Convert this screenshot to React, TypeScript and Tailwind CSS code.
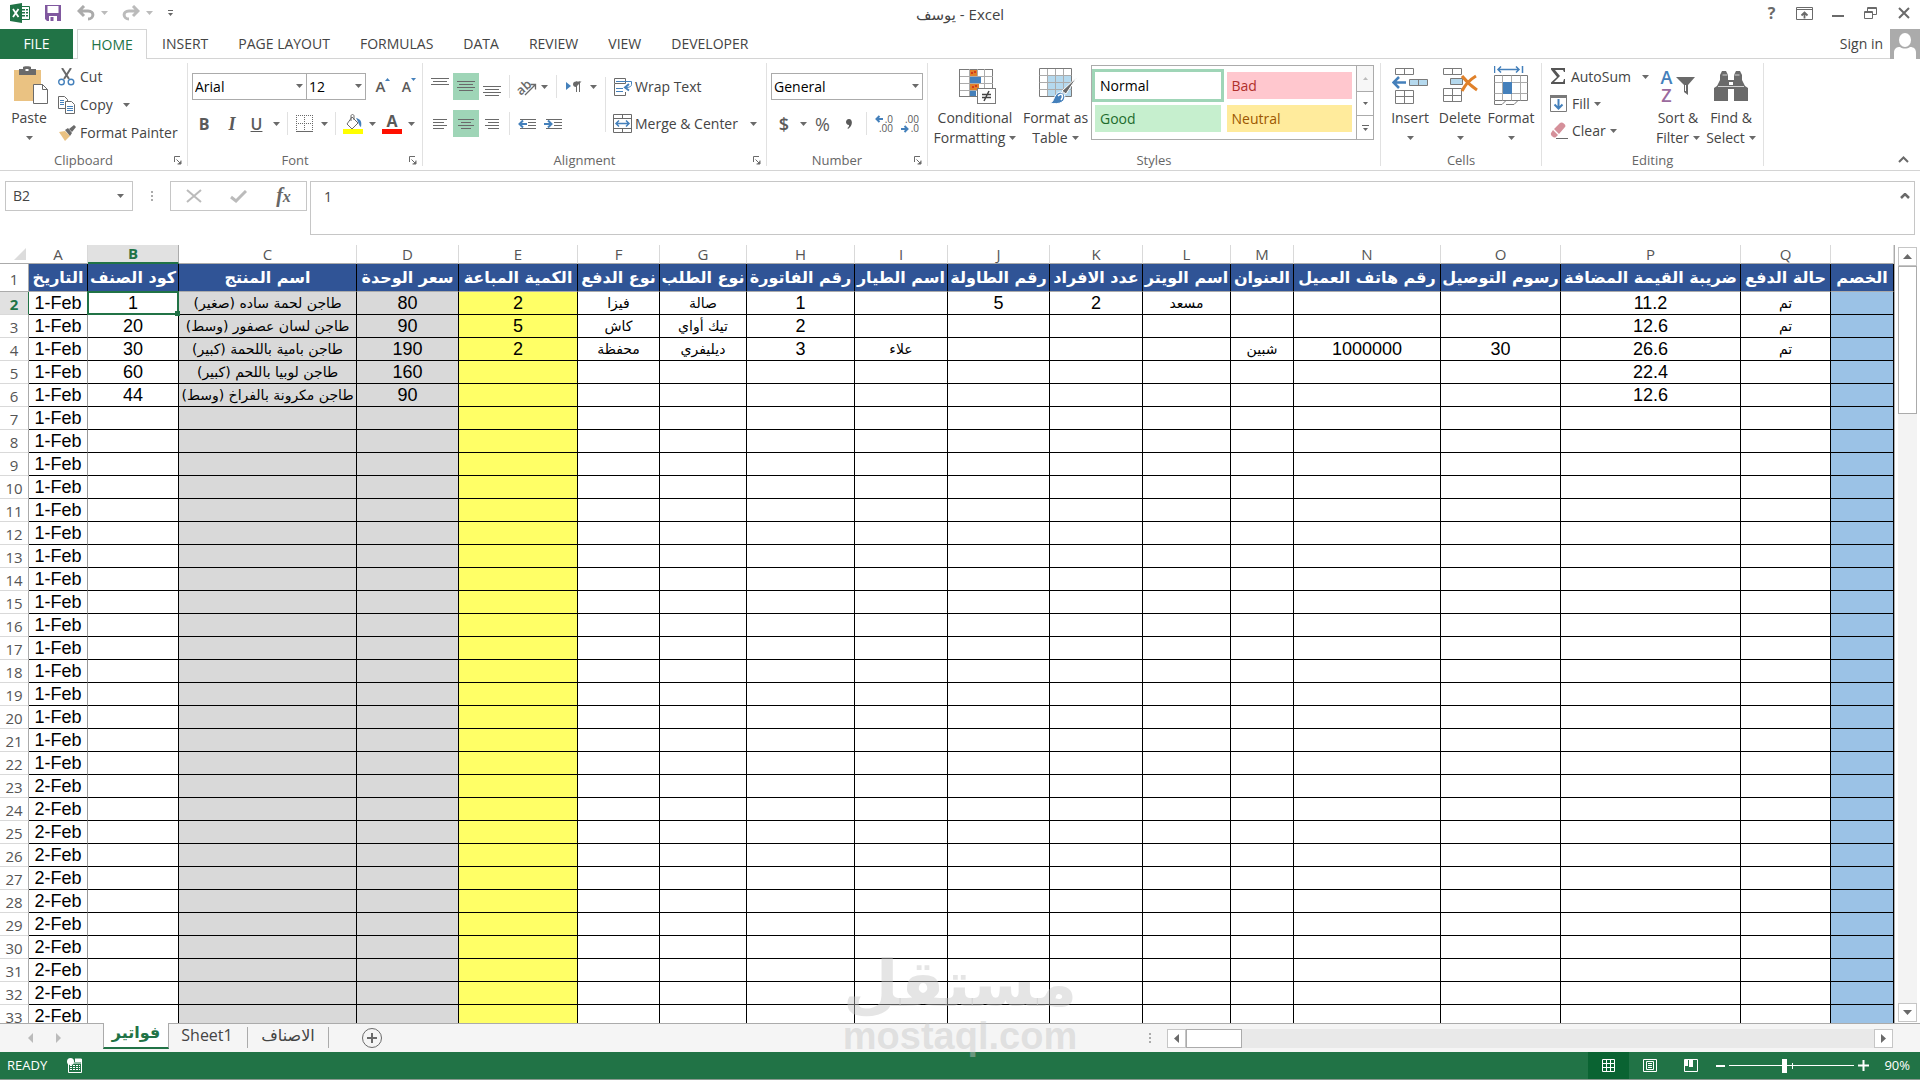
import type { ReactNode } from "react";
import clsx from "clsx";

type Kids = { children?: ReactNode };

const menuTabs = ["INSERT", "PAGE LAYOUT", "FORMULAS", "DATA", "REVIEW", "VIEW", "DEVELOPER"];

const columns = [
  { id: "A", title: "التاريخ", width: "w-[59px]" },
  { id: "B", title: "كود الصنف", width: "w-[91px]" },
  { id: "C", title: "اسم المنتج", width: "w-[178px]" },
  { id: "D", title: "سعر الوحدة", width: "w-[102px]" },
  { id: "E", title: "الكمية المباعة", width: "w-[119px]" },
  { id: "F", title: "نوع الدفع", width: "w-[82px]" },
  { id: "G", title: "نوع الطلب", width: "w-[87px]" },
  { id: "H", title: "رقم الفاتورة", width: "w-[108px]" },
  { id: "I", title: "اسم الطيار", width: "w-[93px]" },
  { id: "J", title: "رقم الطاولة", width: "w-[102px]" },
  { id: "K", title: "عدد الافراد", width: "w-[93px]" },
  { id: "L", title: "اسم الويتر", width: "w-[88px]" },
  { id: "M", title: "العنوان", width: "w-[63px]" },
  { id: "N", title: "رقم هاتف العميل", width: "w-[147px]" },
  { id: "O", title: "رسوم التوصيل", width: "w-[120px]" },
  { id: "P", title: "ضريبة القيمة المضافة", width: "w-[180px]" },
  { id: "Q", title: "حالة الدفع", width: "w-[90px]" },
  { id: "R", title: "الخصم", width: "w-auto" },
];

const data: Record<number, Record<string, string>> = {
  2: { B: "1", C: "طاجن لحمة ساده (صغير)", D: "80", E: "2", F: "فيزا", G: "صالة", H: "1", J: "5", K: "2", L: "مسعد", P: "11.2", Q: "تم" },
  3: { B: "20", C: "طاجن لسان عصفور (وسط)", D: "90", E: "5", F: "كاش", G: "تيك أواي", H: "2", P: "12.6", Q: "تم" },
  4: { B: "30", C: "طاجن بامية باللحمة (كبير)", D: "190", E: "2", F: "محفظة", G: "ديليفري", H: "3", I: "علاء", M: "شبين", N: "1000000", O: "30", P: "26.6", Q: "تم" },
  5: { B: "60", C: "طاجن لوبيا باللحم (كبير)", D: "160", P: "22.4" },
  6: { B: "44", C: "طاجن مكرونة بالفراخ (وسط)", D: "90", P: "12.6" },
};

const rows = Array.from({ length: 32 }, (_, i) => i + 2);

// columns that hold Arabic text use a smaller size than the numeric ones
const textColumns = ["C", "F", "G", "I", "L", "M", "Q"];

function cellFill(id: string) {
  if (id === "C" || id === "D") return "bg-[#d9d9d9]";
  if (id === "E") return "bg-[#ffff66]";
  if (id === "R") return "bg-[#9bc2e6]";
  return "bg-white";
}

function Caret({ className = "text-[#6a6a6a]" }: { className?: string }) {
  return (
    <svg width="7" height="4" viewBox="0 0 7 4" className={clsx("shrink-0", className)}>
      <path d="M0 0h7L3.5 4z" fill="currentColor" />
    </svg>
  );
}

function Lines({ rows: r, w = 18, h = 16 }: { rows: number[][]; w?: number; h?: number }) {
  return (
    <svg width={w} height={h} viewBox={`0 0 ${w} ${h}`} shapeRendering="crispEdges" fill="#6a6a6a">
      {r.map(([x, y, len]) => (
        <rect key={y} x={x} y={y} width={len} height="1" />
      ))}
    </svg>
  );
}

function Tool({ label, className, children }: Kids & { label: string; className: string }) {
  return (
    <button aria-label={label} className={clsx("flex h-[27px] shrink-0 items-center justify-center", className)}>
      {children}
    </button>
  );
}

function Sep({ className = "mx-1" }: { className?: string }) {
  return <span className={clsx("h-[23px] w-px shrink-0 bg-[#e1e1e1]", className)} />;
}

function Group({ title, launcher, className, children }: Kids & { title: string; launcher?: boolean; className: string }) {
  return (
    <section className={clsx("flex shrink-0 flex-col border-r border-[#e1e1e1]", className)}>
      <div className="flex h-[88px]">{children}</div>
      <div className="flex h-[15px] items-center">
        <h2 className="flex-1 pt-1 text-center text-[13px] leading-[15px] text-[#666]">{title}</h2>
        {launcher && (
          <button aria-label={title + " settings"} className="flex w-5 justify-center pt-1">
            <svg width="9" height="9" viewBox="0 0 9 9" fill="none" stroke="#6a6a6a">
              <path d="M1.500 6V.5H7M3.500 3.500l4 4M8 4.500V8H4.500" />
              <path d="M8 5v3H5z" fill="#6a6a6a" stroke="none" />
            </svg>
          </button>
        )}
      </div>
    </section>
  );
}

function Big({ icon, lines, className, children }: { icon: ReactNode; lines: string; className: string; children?: ReactNode }) {
  return (
    <button className={clsx("flex shrink-0 flex-col items-center whitespace-nowrap text-sm leading-5 text-[#444]", className)}>
      <span className="flex h-[45px] items-center">{icon}</span>
      <span>{lines}</span>
      <span className="flex h-5 items-center gap-1">
        {children}
        <Caret />
      </span>
    </button>
  );
}

function Small({ icon, caret, className, children }: Kids & { icon: ReactNode; caret?: string; className: string }) {
  return (
    <button className={clsx("flex items-center whitespace-nowrap text-sm text-[#444]", className)}>
      <span className="flex w-[22px] justify-start">{icon}</span>
      {children}
      {caret && (
        <span className={caret}>
          <Caret />
        </span>
      )}
    </button>
  );
}

function Combo({ label, value, className }: { label: string; value: string; className: string }) {
  return (
    <div className={clsx("relative h-[27px]", className)}>
      <select aria-label={label} defaultValue={value} className="h-full w-full appearance-none border border-[#ababab] bg-white pl-0.5 text-sm text-black outline-none">
        <option>{value}</option>
      </select>
      <span className="pointer-events-none absolute right-1 top-[11px]">
        <Caret />
      </span>
    </div>
  );
}

function TitleBar() {
  return (
    <header className="flex h-[29px] items-center">
      <div className="flex flex-1 items-center pb-[3px]">
        <svg width="20" height="20" viewBox="0 0 20 20" className="ml-[10px]">
          <path d="M11 3.500h8.500v13H11" fill="#fff" stroke="#217346" />
          <path d="M12 6h3v1.500h-3zM16 6h2v1.500h-2zM12 9h3v1.500h-3zM16 9h2v1.500h-2zM12 12h3v1.500h-3zM16 12h2v1.500h-2z" fill="#217346" />
          <path d="M0 2l12-2v20L0 18z" fill="#217346" />
          <path d="M3 6l5.500 8M8.500 6L3 14" stroke="#fff" strokeWidth="1.800" />
        </svg>
        <button aria-label="Save" className="ml-[15px]">
          <svg width="16" height="16" viewBox="0 0 16 16">
            <path d="M0 0h16v16H2l-2-2z" fill="#80589f" />
            <path d="M2.500 1h11v7h-11zM4 11h8v5H4z" fill="#fff" />
            <path d="M5.500 12h3v4h-3z" fill="#80589f" />
          </svg>
        </button>
        <button aria-label="Undo" className="ml-4 flex items-center gap-[6px]">
          <svg width="18" height="16" viewBox="0 0 18 16" fill="none" stroke="#ababab" strokeWidth="3">
            <path d="M2 6h9c7 0 6 8 0 8M7 1L2 6l5 5" />
          </svg>
          <Caret className="text-[#bbb]" />
        </button>
        <button aria-label="Redo" className="ml-[14px] flex items-center gap-[6px]">
          <svg width="18" height="16" viewBox="0 0 18 16" fill="none" stroke="#bbb" strokeWidth="3">
            <path d="M16 6H7c-7 0-6 8 0 8M11 1l5 5-5 5" />
          </svg>
          <Caret className="text-[#bbb]" />
        </button>
        <button aria-label="Customize toolbar" className="ml-[15px] flex flex-col items-center gap-[2px]">
          <span className="h-px w-[5px] bg-[#666]" />
          <svg width="5" height="3" viewBox="0 0 5 3"><path d="M0 0h5L2.500 3z" fill="#666" /></svg>
        </button>
      </div>
      <h1 className="text-[15px] text-[#444]">يوسف - Excel</h1>
      <div className="flex flex-1 items-center justify-end pb-[3px] text-[#6a6a6a]">
        <button aria-label="Help" className="w-[33px] text-base font-bold leading-5">?</button>
        <button aria-label="Ribbon display options" className="flex w-[33px] justify-center">
          <svg width="17" height="13" viewBox="0 0 17 13" fill="none" stroke="currentColor">
            <path d="M.5.5h16v12H.5zM.5 2.500h16" />
            <path d="M8.500 11.500v-6M5.500 8.500l3-3 3 3" strokeWidth="1.800" />
          </svg>
        </button>
        <button aria-label="Minimize" className="flex w-[33px] justify-center pt-[6px]">
          <span className="h-[2px] w-3 bg-[#6a6a6a]" />
        </button>
        <button aria-label="Restore" className="flex w-[33px] justify-center">
          <svg width="13" height="12" viewBox="0 0 13 12" fill="none" stroke="currentColor">
            <path d="M3.500 4V.5h9v7H9M3.500 1.500h9M.5 4.500h8v7h-8zM.5 5.500h8" />
          </svg>
        </button>
        <button aria-label="Close" className="flex w-[33px] justify-center">
          <svg width="12" height="12" viewBox="0 0 12 12" stroke="currentColor" strokeWidth="2">
            <path d="M1 1l10 10M11 1L1 11" />
          </svg>
        </button>
      </div>
    </header>
  );
}

function MenuTabs() {
  return (
    <nav className="flex h-[30px] text-sm text-[#444]">
      <button className="w-[73px] bg-[#217346] text-white">FILE</button>
      <span className="w-1 border-b border-[#d4d4d4]" />
      <button className="w-[70px] border border-b-0 border-[#d4d4d4] text-[#217346]">HOME</button>
      <div className="flex flex-1 border-b border-[#d4d4d4]">
        {menuTabs.map((tab) => (
          <button key={tab} className="px-[15px]">
            {tab}
          </button>
        ))}
        <a href="#signin" className="ml-auto mr-[7px] flex items-center">
          Sign in
        </a>
      </div>
      <svg width="30" height="30" viewBox="0 0 30 30">
        <path d="M0 0h30v30H0z" fill="#ababab" />
        <ellipse cx="15" cy="11" rx="6" ry="7" fill="#fff" />
        <path d="M4 30v-6c0-5 3-6 6-6 3 2 7 2 10 0 4 0 6 2 6 6v6z" fill="#fff" />
      </svg>
    </nav>
  );
}

function ClipboardGroup() {
  return (
    <Group title="Clipboard" launcher className="w-[188px]">
      <Big
        className="w-[58px]"
        lines="Paste"
        icon={
          <svg width="36" height="39" viewBox="0 0 36 39" className="ml-1">
            <path d="M1 4h27v31H1z" fill="#eac282" />
            <path d="M6 3h4V1c0-1 8-1 8 0v2h5v6H6z" fill="#6a6a6a" />
            <path d="M12.500 3h3v2h-3z" fill="#fff" />
            <path d="M20.500 18.500h9l5 5v14h-14z" fill="#fff" stroke="#6a6a6a" />
            <path d="M29.500 18.500v5h5" fill="none" stroke="#6a6a6a" />
          </svg>
        }
      />
      <div className="flex flex-col">
        <Small
          className="h-7"
          icon={
            <svg width="17" height="18" viewBox="0 0 17 18" fill="none">
              <path d="M4 0l7 11M13 0L6 11" stroke="#6a6a6a" strokeWidth="2" />
              <circle cx="3.500" cy="14" r="2.800" stroke="#4480bb" strokeWidth="1.400" />
              <circle cx="13" cy="14" r="2.800" stroke="#4480bb" strokeWidth="1.400" />
            </svg>
          }
        >
          Cut
        </Small>
        <Small
          className="h-7"
          caret="ml-[10px]"
          icon={
            <svg width="18" height="18" viewBox="0 0 18 18" stroke="#6a6a6a" fill="#fff">
              <path d="M.5.5h6l3 3v9h-9z" />
              <path d="M2 4.500h4M2 6.500h4M2 8.500h4" stroke="#4480bb" />
              <path d="M7.500 5.500h6l3 3v9h-9z" />
              <path d="M9 10.500h6M9 12.500h6M9 14.500h6" stroke="#4480bb" />
            </svg>
          }
        >
          Copy
        </Small>
        <Small
          className="h-7"
          icon={
            <svg width="18" height="16" viewBox="0 0 18 16">
              <path d="M1 7l6-1 5 5-5 5z" fill="#eac282" />
              <path d="M7 5l3-2 4 5-2 3zM11 4l5-4 2 2-4 5z" fill="#6a6a6a" />
            </svg>
          }
        >
          Format Painter
        </Small>
      </div>
    </Group>
  );
}

function FontGroup() {
  return (
    <Group title="Font" launcher className="w-[235px]">
      <div className="flex flex-col gap-[10px] pt-[10px] text-[#5a5a5a]">
        <div className="flex pl-1">
          <Combo label="Font" value="Arial" className="w-[115px]" />
          <Combo label="Font size" value="12" className="-ml-px w-[60px]" />
          <Tool label="Increase font size" className="ml-1 w-[26px]">
            <span className="text-[15px] font-semibold">A</span>
            <svg width="5" height="3" viewBox="0 0 5 3" className="mb-[14px]">
              <path d="M0 3h5L2.500 0z" fill="#4480bb" />
            </svg>
          </Tool>
          <Tool label="Decrease font size" className="w-[26px]">
            <span className="text-sm font-semibold">A</span>
            <svg width="5" height="3" viewBox="0 0 5 3" className="mb-[14px]">
              <path d="M0 0h5L2.500 3z" fill="#4480bb" />
            </svg>
          </Tool>
        </div>
        <div className="flex items-center pl-0.5">
          <Tool label="Bold" className="w-7 text-base font-bold">B</Tool>
          <Tool label="Italic" className="w-7 font-['Liberation_Serif',serif] text-lg font-bold italic">I</Tool>
          <Tool label="Underline" className="w-[21px] text-base font-semibold underline">U</Tool>
          <Tool label="Underline options" className="w-[18px]"><Caret /></Tool>
          <Sep className="ml-[2px] mr-1" />
          <Tool label="Borders" className="w-[25px]">
            <svg width="17" height="17" viewBox="0 0 17 17" fill="none" stroke="#6a6a6a">
              <path d="M.5 0v16M16.500 0v16M8.500 0v16M0 .5h17M0 8.500h17" strokeDasharray="1 1" />
              <path d="M0 16.500h17" />
            </svg>
          </Tool>
          <Tool label="Border options" className="w-[14px]"><Caret /></Tool>
          <Sep className="ml-1 mr-[3px]" />
          <Tool label="Fill color" className="w-[27px]">
            <svg width="20" height="20" viewBox="0 0 20 20">
              <path d="M9 3l6 6-6 6-5-5z" fill="#fff" stroke="#6a6a6a" />
              <path d="M8 7V2c0-2 3-2 3 0v4" fill="none" stroke="#6a6a6a" />
              <path d="M13 4c5 1 6 4 5 9-2-1-2-4-5-9z" fill="#4480bb" />
              <path d="M0 15h20v5H0z" fill="#ff0" />
            </svg>
          </Tool>
          <Tool label="Fill color options" className="w-[13px]"><Caret /></Tool>
          <Tool label="Font color" className="w-[26px] flex-col">
            <span className="text-base font-bold leading-4">A</span>
            <span className="h-[5px] w-5 bg-[#ff0f00]" />
          </Tool>
          <Tool label="Font color options" className="w-[13px]"><Caret /></Tool>
        </div>
      </div>
    </Group>
  );
}

function AlignmentGroup() {
  return (
    <Group title="Alignment" launcher className="w-[344px]">
      <div className="flex w-[182px] flex-col gap-[10px] pl-1 pt-[10px]">
        <div className="flex items-center">
          <Tool label="Top align" className="w-[26px]"><Lines rows={[[0, 1, 18], [2, 4, 14], [0, 7, 18]]} h={20} /></Tool>
          <Tool label="Middle align" className="w-[26px] bg-[#9fd5b7]"><Lines rows={[[0, 4, 18], [2, 7, 14], [0, 10, 18], [2, 13, 14]]} h={20} /></Tool>
          <Tool label="Bottom align" className="w-[26px]"><Lines rows={[[0, 9, 18], [2, 12, 14], [0, 15, 18], [2, 18, 14]]} h={20} /></Tool>
          <Sep />
          <Tool label="Orientation" className="w-[26px]">
            <svg width="20" height="18" viewBox="0 0 20 18" overflow="visible">
              <text x="0" y="14" fontSize="13" fontWeight="600" fill="#6a6a6a" transform="rotate(-42 7 11)">ab</text>
              <path d="M8 17L18 7M13.500 6.500H18.500V11.500" fill="none" stroke="#6a6a6a" strokeWidth="1.300" />
            </svg>
          </Tool>
          <Tool label="Orientation options" className="w-2"><Caret /></Tool>
          <Sep className="ml-2 mr-1" />
          <Tool label="Text direction" className="w-[25px]">
            <svg width="16" height="12" viewBox="0 0 16 12">
              <path d="M0 1l5 4-5 4z" fill="#4480bb" />
              <path d="M15.500.5H10c-4 0-4 5.500 0 5.500z" fill="#6a6a6a" />
              <path d="M10.500.5V11M13.500.5V11" stroke="#6a6a6a" />
            </svg>
          </Tool>
          <Tool label="Text direction options" className="w-[14px]"><Caret /></Tool>
        </div>
        <div className="flex items-center">
          <Tool label="Align left" className="w-[26px]"><Lines rows={[[0, 1, 14], [0, 4, 11], [0, 7, 14], [0, 10, 11]]} w={14} h={12} /></Tool>
          <Tool label="Center" className="w-[26px] bg-[#9fd5b7]"><Lines rows={[[0, 1, 16], [3, 4, 10], [0, 7, 16], [3, 10, 10]]} w={16} h={12} /></Tool>
          <Tool label="Align right" className="w-[26px]"><Lines rows={[[0, 1, 14], [3, 4, 11], [0, 7, 14], [3, 10, 11]]} w={14} h={12} /></Tool>
          <Sep />
          <Tool label="Decrease indent" className="w-[26px]">
            <svg width="18" height="12" viewBox="0 0 18 12" fill="none" stroke="#6a6a6a">
              <path d="M2 1.500h16M10 4.500h8M10 7.500h8M2 10.500h16" />
              <path d="M9 6H2M5 2.500L1.500 6 5 9.500" stroke="#4480bb" strokeWidth="2" />
            </svg>
          </Tool>
          <Tool label="Increase indent" className="w-[26px]">
            <svg width="18" height="12" viewBox="0 0 18 12" fill="none" stroke="#6a6a6a">
              <path d="M2 1.500h16M10 4.500h8M10 7.500h8M2 10.500h16" />
              <path d="M0 6h7M4 2.500L7.500 6 4 9.500" stroke="#4480bb" strokeWidth="2" />
            </svg>
          </Tool>
        </div>
      </div>
      <span className="mt-[14px] h-[55px] w-px bg-[#e1e1e1]" />
      <div className="flex flex-col gap-[10px] pl-[7px] pt-[10px]">
        <Small
          className="h-[27px]"
          icon={
            <svg width="20" height="18" viewBox="0 0 20 18" fill="none" stroke="#6a6a6a">
              <path d="M1.500.5h11v5h-11zM1.500 6v11.500h11V14" />
              <path d="M3 3.500h15.500v3c0 2-2 3-6 3M3 10.500h7M3 13.500h7" stroke="#4480bb" />
              <path d="M16 6l-4 3.500 4 3" stroke="#4480bb" strokeWidth="2" />
            </svg>
          }
        >
          Wrap Text
        </Small>
        <Small
          className="h-[27px]"
          caret="ml-3"
          icon={
            <svg width="19" height="19" viewBox="0 0 19 19" fill="none" stroke="#6a6a6a">
              <path d="M.5.5h18v18H.5zM.5 4.500h18M.5 14.500h18M9.500.5v4M9.500 14.500v4" />
              <path d="M3 9.500h13M6 6.500l-3 3 3 3M13 6.500l3 3-3 3" stroke="#4480bb" strokeWidth="1.500" />
            </svg>
          }
        >
          Merge &amp; Center
        </Small>
      </div>
    </Group>
  );
}

function DecimalIcon({ top, bottom, left }: { top: string; bottom: string; left?: boolean }) {
  return (
    <span className="relative flex w-[18px] flex-col text-right text-[10px] leading-[9px]">
      <span>{top}</span>
      <span>{bottom}</span>
      <svg width="8" height="8" viewBox="0 0 8 8" fill="none" stroke="#4480bb" strokeWidth="2" className={clsx("absolute left-0", left ? "top-0" : "bottom-0")}>
        {left ? <path d="M8 4H2M4.500 1l-3 3 3 3" /> : <path d="M0 4h6M3.500 1l3 3-3 3" />}
      </svg>
    </span>
  );
}

function NumberGroup() {
  return (
    <Group title="Number" launcher className="w-[161px]">
      <div className="flex flex-col gap-[10px] pt-[10px] text-[#5a5a5a]">
        <div className="pl-1">
          <Combo label="Number format" value="General" className="w-[152px]" />
        </div>
        <div className="flex items-center pl-1">
          <Tool label="Accounting format" className="w-[26px] text-lg font-semibold">$</Tool>
          <Tool label="Accounting options" className="w-3"><Caret /></Tool>
          <Tool label="Percent style" className="w-[27px] text-lg">%</Tool>
          <Tool label="Comma style" className="w-[26px]">
            <svg width="6" height="10" viewBox="0 0 6 10">
              <path d="M3 0c4 0 4 7-1 10l-.5-1C3 8 3 7 3 6-1 6-1 0 3 0z" fill="#5a5a5a" />
            </svg>
          </Tool>
          <Sep className="ml-1 mr-1" />
          <Tool label="Increase decimal" className="w-[26px]"><DecimalIcon top=".0" bottom=".00" left /></Tool>
          <Tool label="Decrease decimal" className="w-[26px]"><DecimalIcon top=".00" bottom=".0" /></Tool>
        </div>
      </div>
    </Group>
  );
}

function StylesGroup() {
  return (
    <Group title="Styles" className="w-[453px]">
      <Big
        className="w-[94px]"
        lines="Conditional"
        icon={
          <svg width="37" height="36" viewBox="0 0 37 36" shapeRendering="crispEdges" className="ml-1">
            <path d="M.5 1.500h33v27H.5z" fill="#fff" stroke="#7a7a7a" />
            <path d="M.5 8.500h33M.5 15.500h33M.5 22.500h33M10.500 1v27M18.500 1v27M25.500 1v27" stroke="#ababab" />
            <path d="M11 2h7v6h-7zM11 16h9v6h-9z" fill="#e0812a" />
            <path d="M11 9h11v6H11zM11 23h6v5h-6z" fill="#4480bb" />
            <path d="M12 4h2v2h-2zM15 3h2v2h-2zM13 18h2v2h-2zM16 17h2v2h-2z" fill="#d33a1c" />
            <path d="M18.500 20.500h18v15h-18z" fill="#fff" stroke="#7a7a7a" />
            <path d="M23 26.500h9M23 29.500h9M30 23l-5 10" stroke="#444" strokeWidth="1.500" shapeRendering="auto" />
          </svg>
        }
      >
        Formatting
      </Big>
      <Big
        className="w-[67px]"
        lines="Format as"
        icon={
          <svg width="38" height="36" viewBox="0 0 38 36" className="ml-1">
            <path d="M.5.5h32v28H.5z" fill="#fff" stroke="#7a7a7a" />
            <path d="M9 8h23v20H9z" fill="#b5d9ee" />
            <path d="M.5 7.500h32M.5 14.500h32M.5 21.500h32M8.500 1v27M16.500 1v27M24.500 1v27" stroke="#ababab" />
            <path d="M38 9L27 26l-4-3z" fill="#6a6a6a" stroke="#fff" />
            <path d="M11 35c5-1 3-9 10-11 6 1 6 7 2 10-3 2-8 2-12 1z" fill="#4480bb" stroke="#fff" />
            <path d="M19 28c4-4 6 0 3 4" fill="none" stroke="#fff" strokeWidth="1.500" />
          </svg>
        }
      >
        Table
      </Big>
      <div className="ml-[2px] mt-[2px] flex h-[75px] w-[283px] border border-[#ababab] text-sm">
        <div className="grid flex-1 grid-cols-2 content-start gap-x-[6px] gap-y-[6px] pl-[3px] pr-1 pt-[6px]">
          <button className="h-[27px] bg-white pl-[5px] text-left text-black outline-3 outline-[#9fd5b7]">Normal</button>
          <button className="h-[27px] bg-[#ffc7ce] pl-[5px] text-left text-[#b0302a]">Bad</button>
          <button className="h-[27px] bg-[#c6efce] pl-[5px] text-left text-[#1d6b2c]">Good</button>
          <button className="h-[27px] bg-[#ffeb9c] pl-[5px] text-left text-[#9c5700]">Neutral</button>
        </div>
        <div className="flex w-[17px] flex-col border-l border-[#ababab]">
          <button aria-label="Scroll up" className="flex h-[25px] items-center justify-center bg-[#f7f7f7]">
            <svg width="5" height="3" viewBox="0 0 5 3"><path d="M0 3h5L2.500 0z" fill="#bbb" /></svg>
          </button>
          <button aria-label="Scroll down" className="flex h-[24px] items-center justify-center border-t border-[#ababab]">
            <svg width="5" height="3" viewBox="0 0 5 3"><path d="M0 0h5L2.500 3z" fill="#666" /></svg>
          </button>
          <button aria-label="More styles" className="flex flex-1 flex-col items-center justify-center gap-[2px] border-t border-[#ababab]">
            <span className="h-px w-[7px] bg-[#666]" />
            <svg width="5" height="3" viewBox="0 0 5 3"><path d="M0 0h5L2.500 3z" fill="#666" /></svg>
          </button>
        </div>
      </div>
    </Group>
  );
}

function CellsGroup() {
  return (
    <Group title="Cells" className="w-[161px]">
      <Big
        className="ml-1 w-[50px]"
        lines="Insert"
        icon={
          <svg width="36" height="38" viewBox="0 0 36 38" fill="#fff" stroke="#7a7a7a">
            <path d="M3.500 1.500h18v6h-18zM12.500 1.500v6M3.500 23.500h18v13h-18zM3.500 29.500h18M12.500 23.500v13" />
            <path d="M17.500 12.500h18v6h-18z" fill="#b5d9ee" />
            <path d="M26.500 12.500v6" />
            <path d="M14 15.500H2M7 10l-5.500 5.500L7 21" fill="none" stroke="#4480bb" strokeWidth="2.500" />
          </svg>
        }
      />
      <Big
        className="w-[50px]"
        lines="Delete"
        icon={
          <svg width="36" height="38" viewBox="0 0 36 38" fill="#fff" stroke="#7a7a7a">
            <path d="M1.500 1.500h18v6h-18zM10.500 1.500v6M1.500 21.500h18v13h-18zM1.500 28.500h18M10.500 21.500v13" />
            <path d="M8.500 11.500h12v6h-12z" fill="#b5d9ee" />
            <path d="M20 9c4 5 9 10 15 14M34 9c-5 3-11 9-14 15" fill="none" stroke="#e0812a" strokeWidth="3" />
          </svg>
        }
      />
      <Big
        className="w-[52px]"
        lines="Format"
        icon={
          <svg width="34" height="40" viewBox="0 0 34 40" fill="#fff" stroke="#7a7a7a">
            <path d="M.5 9.500h33v25H.5z" />
            <path d="M.5 16.500h33M.5 27.500h33M8.500 9.500v25M17.500 9.500v25M26.500 9.500v25" stroke="#ababab" />
            <path d="M.5 35v3.500H8l4-4M12 38.500h8l4-4" fill="none" />
            <path d="M9 16h9v12H9z" fill="#4480bb" stroke="none" />
            <path d="M.5 0v7M28.500 0v7M4 3.500h21M7 .5l-3 3 3 3M22 .5l3 3-3 3" fill="none" stroke="#4480bb" strokeWidth="1.500" />
          </svg>
        }
      />
    </Group>
  );
}

function EditingGroup() {
  return (
    <Group title="Editing" className="w-[222px]">
      <div className="flex w-[107px] flex-col pl-2">
        <Small
          className="h-[27px]"
          caret="ml-[11px]"
          icon={
            <svg width="16" height="17" viewBox="0 0 16 17">
              <path d="M1 0h14v4h-1l-1-2H5l5 6-6 6h9l1-3h1v5H1v-1.500L7 9 1 1.500z" fill="#555" />
            </svg>
          }
        >
          AutoSum
        </Small>
        <Small
          className="h-[27px]"
          caret="ml-1"
          icon={
            <svg width="17" height="18" viewBox="0 0 17 18" fill="none">
              <path d="M.5.5h16v16H.5z" fill="#fff" stroke="#7a7a7a" />
              <path d="M0 0h17v3H0z" fill="#7a7a7a" />
              <path d="M8.500 4v10M4.500 9.500l4 4 4-4" stroke="#4480bb" strokeWidth="2" />
            </svg>
          }
        >
          Fill
        </Small>
        <Small
          className="h-[27px]"
          caret="ml-1"
          icon={
            <svg width="18" height="17" viewBox="0 0 18 17">
              <path d="M4 7l6-6c2-2 7 2 5 4l-6 7z" fill="#d5909a" />
              <path d="M3 8l5 5-2 2c-2 2-6-2-5-4z" fill="#d5909a" />
              <path d="M6 16.500h12" stroke="#6a6a6a" />
            </svg>
          }
        >
          Clear
        </Small>
      </div>
      <Big
        className="w-[58px]"
        lines="Sort &"
        icon={
          <span className="flex items-center gap-1">
            <span className="flex flex-col text-lg font-semibold leading-[18px]">
              <span className="text-[#4480bb]">A</span>
              <span className="text-[#9b6b9e]">Z</span>
            </span>
            <svg width="19" height="18" viewBox="0 0 19 18">
              <path d="M0 0h19l-7 8v10l-4-3V8z" fill="#6a6a6a" />
              <path d="M9.500 8v6" stroke="#fff" />
            </svg>
          </span>
        }
      >
        Filter
      </Big>
      <Big
        className="w-[48px]"
        lines="Find &"
        icon={
          <svg width="34" height="32" viewBox="0 0 34 32" fill="#6a6a6a">
            <path d="M8 1h4l2 4v5h6V5l2-4h4l2 4v5l3 6 3 2v13H20V19h-6v12H0V18l3-2 3-6V5z" />
            <path d="M8.500 5h5M20.500 5h5M4 16.500h26" stroke="#fff" fill="none" opacity=".7" />
            <path d="M15 12h4v3h-4z" fill="#fff" />
          </svg>
        }
      >
        Select
      </Big>
    </Group>
  );
}

function FormulaBar() {
  return (
    <div className="flex h-[74px] items-start bg-white pl-[5px] pr-[5px] pt-[10px] text-[#444]">
      <div className="flex h-[30px] w-32 shrink-0 items-center border border-[#c6c6c6] pr-2">
        <input aria-label="Name box" defaultValue="B2" className="w-full min-w-0 pl-[7px] text-sm outline-none" />
        <button aria-label="Named ranges"><Caret /></button>
      </div>
      <span className="flex h-[30px] w-[37px] shrink-0 flex-col items-center justify-center gap-[2px]">
        <i className="size-[2px] bg-[#ababab]" />
        <i className="size-[2px] bg-[#ababab]" />
        <i className="size-[2px] bg-[#ababab]" />
      </span>
      <div className="flex h-[30px] w-[137px] shrink-0 items-center border border-[#c6c6c6]">
        <button aria-label="Cancel" className="flex w-[45px] justify-center">
          <svg width="16" height="14" viewBox="0 0 16 14" stroke="#bbb" strokeWidth="2"><path d="M1 1l14 12M15 1L1 13" /></svg>
        </button>
        <button aria-label="Enter" className="flex w-[45px] justify-center">
          <svg width="17" height="13" viewBox="0 0 17 13" fill="none" stroke="#bbb" strokeWidth="3"><path d="M1 7l5 4L16 1" /></svg>
        </button>
        <button aria-label="Insert function" className="w-[45px] font-['Liberation_Serif',serif] text-xl font-bold italic leading-6 text-[#666]">
          f<span className="text-base">x</span>
        </button>
      </div>
      <div className="ml-[3px] flex h-[54px] flex-1 items-start border border-[#c6c6c6]">
        <textarea aria-label="Formula" defaultValue="1" className="h-full flex-1 resize-none py-[3px] pl-[13px] text-sm leading-6 outline-none" />
        <button aria-label="Collapse formula bar" className="mr-1 mt-[11px]">
          <svg width="10" height="6" viewBox="0 0 10 6" fill="none" stroke="#6a6a6a" strokeWidth="2.500"><path d="M1 5l4-4 4 4" /></svg>
        </button>
      </div>
    </div>
  );
}

function Sheet() {
  return (
    <div className="min-w-0 flex-1 overflow-hidden border-r border-[#ababab]">
      <table className="w-full table-fixed border-separate border-spacing-0 text-center">
        <colgroup>
          <col className="w-[29px]" />
          {columns.map((c) => (
            <col key={c.id} className={c.width} />
          ))}
        </colgroup>
        <thead>
          <tr className="text-[15px] leading-[18px] text-[#555]">
            <th className="h-[19px] border-b border-[#ababab] p-0">
              <svg width="12" height="12" viewBox="0 0 12 12" className="ml-auto mr-[3px]"><path d="M12 0v12H0z" fill="#dcdcdc" /></svg>
            </th>
            {columns.map((c) => (
              <th
                key={c.id}
                className={clsx(
                  "h-[19px] p-0",
                  c.id === "B"
                    ? "border-b-2 border-r border-b-[#217346] border-r-[#ababab] bg-[#e1e1e1] leading-[17px] text-[#217346]"
                    : "border-b border-r border-b-[#ababab] border-r-[#d9d9d9] font-normal",
                )}
              >
                {c.id === "R" ? "" : c.id}
              </th>
            ))}
          </tr>
        </thead>
        <tbody>
          <tr>
            <th className="h-[28px] border-b border-r border-b-[#ababab] border-r-[#ababab] p-0 pt-1 text-[15px] font-normal leading-[23px] text-[#555]">1</th>
            {columns.map((c) => (
              <td
                key={c.id}
                dir="rtl"
                className="h-[28px] overflow-hidden whitespace-nowrap border-b border-r border-b-[#ababab] border-r-black bg-[#305496] p-0 font-['DejaVu_Sans',sans-serif] text-base font-bold leading-[26px] text-white"
              >
                {c.title}
              </td>
            ))}
          </tr>
          {rows.map((n) => (
            <tr key={n}>
              <th
                className={clsx(
                  "h-[23px] border-b border-r p-0 pt-[2px] text-[15px] leading-5",
                  n === 2
                    ? "border-b-[#d9d9d9] border-r-[#217346] bg-[#e1e1e1] text-[#217346]"
                    : "border-b-[#d9d9d9] border-r-[#ababab] font-normal text-[#555]",
                )}
              >
                {n}
              </th>
              {columns.map((c) => (
                <td
                  key={c.id}
                  className={clsx(
                    "h-[23px] whitespace-nowrap border-b border-r border-b-black p-0 text-black",
                    textColumns.includes(c.id)
                      ? "font-['DejaVu_Sans',sans-serif] text-sm leading-[22px]"
                      : "pt-px font-['Liberation_Sans',sans-serif] text-lg leading-[21px]",
                    c.id === "A" ? "border-r-[#9a9a9a]" : "border-r-black",
                    cellFill(c.id),
                    c.id === "B" && n === 2 && "relative",
                  )}
                >
                  {c.id === "A" ? (n < 23 ? "1-Feb" : "2-Feb") : data[n]?.[c.id]}
                  {c.id === "B" && n === 2 && (
                    <span className="pointer-events-none absolute -inset-px border-2 border-[#217346]">
                      <i className="absolute -bottom-[3px] -right-[3px] size-[5px] bg-[#217346]" />
                    </span>
                  )}
                </td>
              ))}
            </tr>
          ))}
        </tbody>
      </table>
    </div>
  );
}

function Arrow({ d }: { d: string }) {
  return (
    <svg width="9" height="9" viewBox="0 0 9 9">
      <path d={d} fill="#6a6a6a" />
    </svg>
  );
}

const scrollButton = "flex size-[19px] shrink-0 items-center justify-center border border-[#c6c6c6] bg-white";

function SheetTabs() {
  return (
    <div className="flex h-[29px] shrink-0 bg-[#f5f5f5] text-base text-[#444]">
      <div className="flex w-[103px] items-center gap-[23px] border-t border-[#ababab] pl-7">
        <button aria-label="Previous sheet"><svg width="5" height="10" viewBox="0 0 5 10"><path d="M5 0v10L0 5z" fill="#bbb" /></svg></button>
        <button aria-label="Next sheet"><svg width="5" height="10" viewBox="0 0 5 10"><path d="M0 0v10l5-5z" fill="#bbb" /></svg></button>
      </div>
      <button className="h-[26px] w-[66px] border-x border-b-2 border-x-[#ababab] border-b-[#217346] bg-white pb-1 font-['DejaVu_Sans',sans-serif] font-bold leading-5 text-[#217346]">فواتير</button>
      <div className="flex flex-1 items-start border-t border-[#ababab]">
        <button className="mt-[3px] h-[21px] w-[79px] border-r border-[#ababab] pb-[6px] pr-[2px] leading-4">Sheet1</button>
        <button className="mt-[3px] h-[21px] w-[81px] border-r border-[#ababab] pb-[6px] leading-4">الاصناف</button>
        <button aria-label="New sheet" className="ml-[33px] mt-1">
          <svg width="20" height="20" viewBox="0 0 20 20" fill="none" stroke="#6a6a6a">
            <circle cx="10" cy="10" r="9.500" />
            <path d="M10 5v10M5 10h10" strokeWidth="2" />
          </svg>
        </button>
      </div>
      <div className="flex w-[771px] items-center border-t border-[#ababab] pr-[27px]">
        <span className="flex w-[18px] flex-col gap-[2px]">
          <i className="size-[2px] bg-[#ababab]" />
          <i className="size-[2px] bg-[#ababab]" />
          <i className="size-[2px] bg-[#ababab]" />
        </span>
        <button aria-label="Scroll left" className={scrollButton}><Arrow d="M7 0v9L2 4.500z" /></button>
        <div className="h-[19px] flex-1 bg-[#e9e9e9]">
          <div className="h-full w-[56px] border border-[#ababab] bg-white" />
        </div>
        <button aria-label="Scroll right" className={scrollButton}><Arrow d="M2 0v9l5-4.500z" /></button>
      </div>
    </div>
  );
}

function StatusBar() {
  return (
    <footer className="flex h-7 shrink-0 items-center border-b border-[#8a9a90] bg-[#217346] text-[13px] text-white">
      <span className="w-[67px] pl-[7px]">READY</span>
      <button aria-label="Record macro">
        <svg width="15" height="15" viewBox="0 0 15 15">
          <path d="M1.500 5v9.500h13V5M8 1h6.500v4H5" fill="none" stroke="#fff" />
          <path d="M8 1h7v3H8z" fill="#fff" />
          <circle cx="3.500" cy="3.500" r="3.500" fill="#fff" />
          <path d="M3 7.500h10M3 9.500h10M3 11.500h10" stroke="#fff" strokeDasharray="2 1" />
        </svg>
      </button>
      <div className="ml-auto flex h-full items-center">
        <button aria-label="Normal view" className="flex h-full w-[41px] items-center justify-center bg-[#0a6332]">
          <svg width="13" height="13" viewBox="0 0 13 13" fill="none" stroke="#fff"><path d="M.5.5h12v12H.5zM4.500 0v13M8.500 0v13M0 4.500h13M0 8.500h13" /></svg>
        </button>
        <button aria-label="Page layout view" className="flex h-full w-[41px] items-center justify-center">
          <svg width="14" height="13" viewBox="0 0 14 13" fill="none" stroke="#fff"><path d="M.5.5h13v12H.5zM3.500 2.500h7v8h-7zM5 4.500h4M5 6.500h4M5 8.500h4" /></svg>
        </button>
        <button aria-label="Page break view" className="flex h-full w-[41px] items-center justify-center">
          <svg width="14" height="13" viewBox="0 0 14 13"><path d="M.5.5h13v12H.5z" fill="none" stroke="#fff" /><path d="M1 1h3v6H1zM5 1h4v7H5z" fill="#fff" /></svg>
        </button>
        <button aria-label="Zoom out" className="ml-[5px] h-[2px] w-[9px] bg-white" />
        <div className="relative ml-1 flex items-center">
          <input
            type="range"
            aria-label="Zoom"
            min="10"
            max="190"
            defaultValue="90"
            className="h-[14px] w-[125px] appearance-none bg-[linear-gradient(#fff,#fff)] bg-[length:100%_1px] bg-center bg-no-repeat [&::-webkit-slider-thumb]:h-[14px] [&::-webkit-slider-thumb]:w-[5px] [&::-webkit-slider-thumb]:appearance-none [&::-webkit-slider-thumb]:bg-white"
          />
          <span className="absolute left-1/2 h-[6px] w-px bg-white" />
        </div>
        <button aria-label="Zoom in" className="ml-1">
          <svg width="11" height="11" viewBox="0 0 11 11" stroke="#fff" strokeWidth="2"><path d="M5.500 0v11M0 5.500h11" /></svg>
        </button>
        <span className="w-[51px] pr-[10px] text-right">90%</span>
      </div>
    </footer>
  );
}

export default function App() {
  return (
    <main className="relative flex h-screen flex-col overflow-hidden bg-white font-['Open_Sans','Noto_Sans','DejaVu_Sans',sans-serif]">
      <TitleBar />
      <MenuTabs />
      <div className="flex h-[112px] shrink-0 border-b border-[#d4d4d4] py-1">
        <ClipboardGroup />
        <FontGroup />
        <AlignmentGroup />
        <NumberGroup />
        <StylesGroup />
        <CellsGroup />
        <EditingGroup />
        <button aria-label="Collapse ribbon" className="ml-auto mr-[11px] self-end pb-[3px]">
          <svg width="11" height="7" viewBox="0 0 11 7" fill="none" stroke="#6a6a6a" strokeWidth="2"><path d="M1 6l4.500-4.500L10 6" /></svg>
        </button>
      </div>
      <FormulaBar />
      <div className="flex min-h-0 flex-1">
        <Sheet />
        <div className="flex w-[25px] flex-col pb-px pl-[3px] pt-[2px]">
          <button aria-label="Scroll up" className={scrollButton}><Arrow d="M0 7h9L4.500 2z" /></button>
          <div className="w-[19px] flex-1 bg-[#f3f3f3]">
            <div className="h-[148px] border border-[#ababab] bg-white" />
          </div>
          <button aria-label="Scroll down" className={scrollButton}><Arrow d="M0 2h9L4.500 7z" /></button>
        </div>
      </div>
      <SheetTabs />
      <StatusBar />
      <div className="pointer-events-none absolute bottom-6 left-1/2 flex -translate-x-1/2 flex-col items-center whitespace-nowrap font-bold text-[#c6c6c6]/45">
        <span className="font-['DejaVu_Sans',sans-serif] text-[64px] leading-[64px]">مستقل</span>
        <span className="font-['Liberation_Sans',sans-serif] text-[38px] leading-10">mostaql.com</span>
      </div>
    </main>
  );
}
